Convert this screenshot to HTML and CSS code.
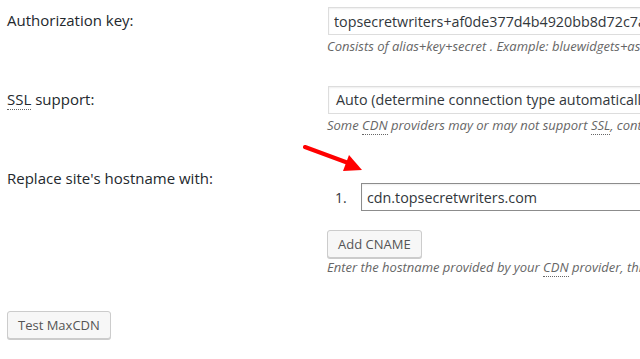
FILE: index.html
```html
<!DOCTYPE html>
<html lang="en">

<head>
    <meta charset="UTF-8">
    <title>CDN settings</title>
    <link rel="stylesheet" href="styles.css">
</head>

<body>
    <div class="wrap">
        <div class="form-table">
            <div class="row first">
                <div class="th">Authorization key:</div>
                <div class="td">
                    <input class="text" type="text" value="topsecretwriters+af0de377d4b4920bb8d72c7a1e3f06b9c2">
                    <p class="description">Consists of alias+key+secret . Example: bluewidgets+asdf82j1nd+hsdf8g73mqpx</p>
                </div>
            </div>

            <div class="row">
                <div class="th"><abbr>SSL</abbr> support:</div>
                <div class="td">
                    <div class="select">Auto (determine connection type automatically)</div>
                    <p class="description">Some <abbr>CDN</abbr> providers may or may not support <abbr>SSL</abbr>, contact your vendor for more information.</p>
                </div>
            </div>

            <div class="row">
                <div class="th">Replace site's hostname with:</div>
                <div class="td">
                    <ol class="cnames">
                        <li><span class="num">1.</span><input class="text dark" type="text" value="cdn.topsecretwriters.com"></li>
                    </ol>
                    <button class="button">Add CNAME</button>
                    <p class="description flush">Enter the hostname provided by your <abbr>CDN</abbr> provider, this value will replace your site's hostname in the HTML.</p>
                </div>
            </div>
        </div>

        <p class="submit"><button class="button">Test MaxCDN</button></p>

        <!-- red annotation arrow -->
        <svg class="arrow" width="70" height="34" viewBox="0 0 70 34">
            <path d="M2 3 L48 20" stroke="#ff0000" stroke-width="4" stroke-linecap="round"/>
            <polygon points="46,11 59,26 40,27" fill="#ff0000"/>
        </svg>
    </div>
</body>

</html>
```

FILE: styles.css
```css
* {
    box-sizing: border-box;
}

html, body {
    margin: 0;
    padding: 0;
    background: #fff;
    overflow: hidden;
}

body {
    width: 640px;
    height: 359px;
    font-family: "Open Sans", "Liberation Sans", sans-serif;
    font-size: 14px;
    color: #23282d;
}

.wrap {
    position: relative;
    padding-left: 7px;
}

.form-table .row {
    display: grid;
    grid-template-columns: 320px 600px;
}

.form-table .row.first .td {
    padding-top: 6px;
}

.th {
    padding: 19px 0 0 0;
    font-size: 15px;
    line-height: 20px;
    white-space: nowrap;
}

.td {
    padding: 15px 0;
}

.first .th {
    padding-top: 10px;
}

abbr {
    text-decoration: none;
    border-bottom: 1px dotted #666;
}

.text,
.select {
    display: block;
    margin: 1px;
    width: 560px;
    height: 28px;
    padding: 0 5px;
    border: 1px solid #ddd;
    box-shadow: inset 0 1px 2px rgba(0, 0, 0, .07);
    font-family: "Open Sans", "Liberation Sans", sans-serif;
    font-size: 14.3px;
    line-height: 26px;
    color: #32373c;
    background: #fff;
    white-space: nowrap;
    outline: none;
}

.select {
    padding-left: 7px;
}

.text.dark {
    border-color: #8c8c8c;
    width: 400px;
}

.description {
    margin: 2px 0 0;
    font-size: 13px;
    font-style: italic;
    line-height: 18px;
    color: #666;
    white-space: nowrap;
}

.description.flush {
    margin-top: 0;
}

.cnames {
    list-style: none;
    margin: 18px 0 18px;
    padding: 0 0 0 7px;
}

.cnames li {
    display: flex;
    align-items: center;
}

.num {
    width: 26px;
    padding-left: 1px;
    color: #32373c;
}

.button {
    display: inline-block;
    height: 28px;
    margin: 0;
    padding: 0 10px 1px;
    border: 1px solid #ccc;
    border-radius: 3px;
    background: #f7f7f7;
    box-shadow: 0 1px 0 #ccc;
    font-family: "Open Sans", "Liberation Sans", sans-serif;
    font-size: 13px;
    line-height: 26px;
    color: #555;
}

.submit {
    margin: 20px 0 0;
}

.arrow {
    position: absolute;
    left: 303px;
    top: 144px;
}
```
